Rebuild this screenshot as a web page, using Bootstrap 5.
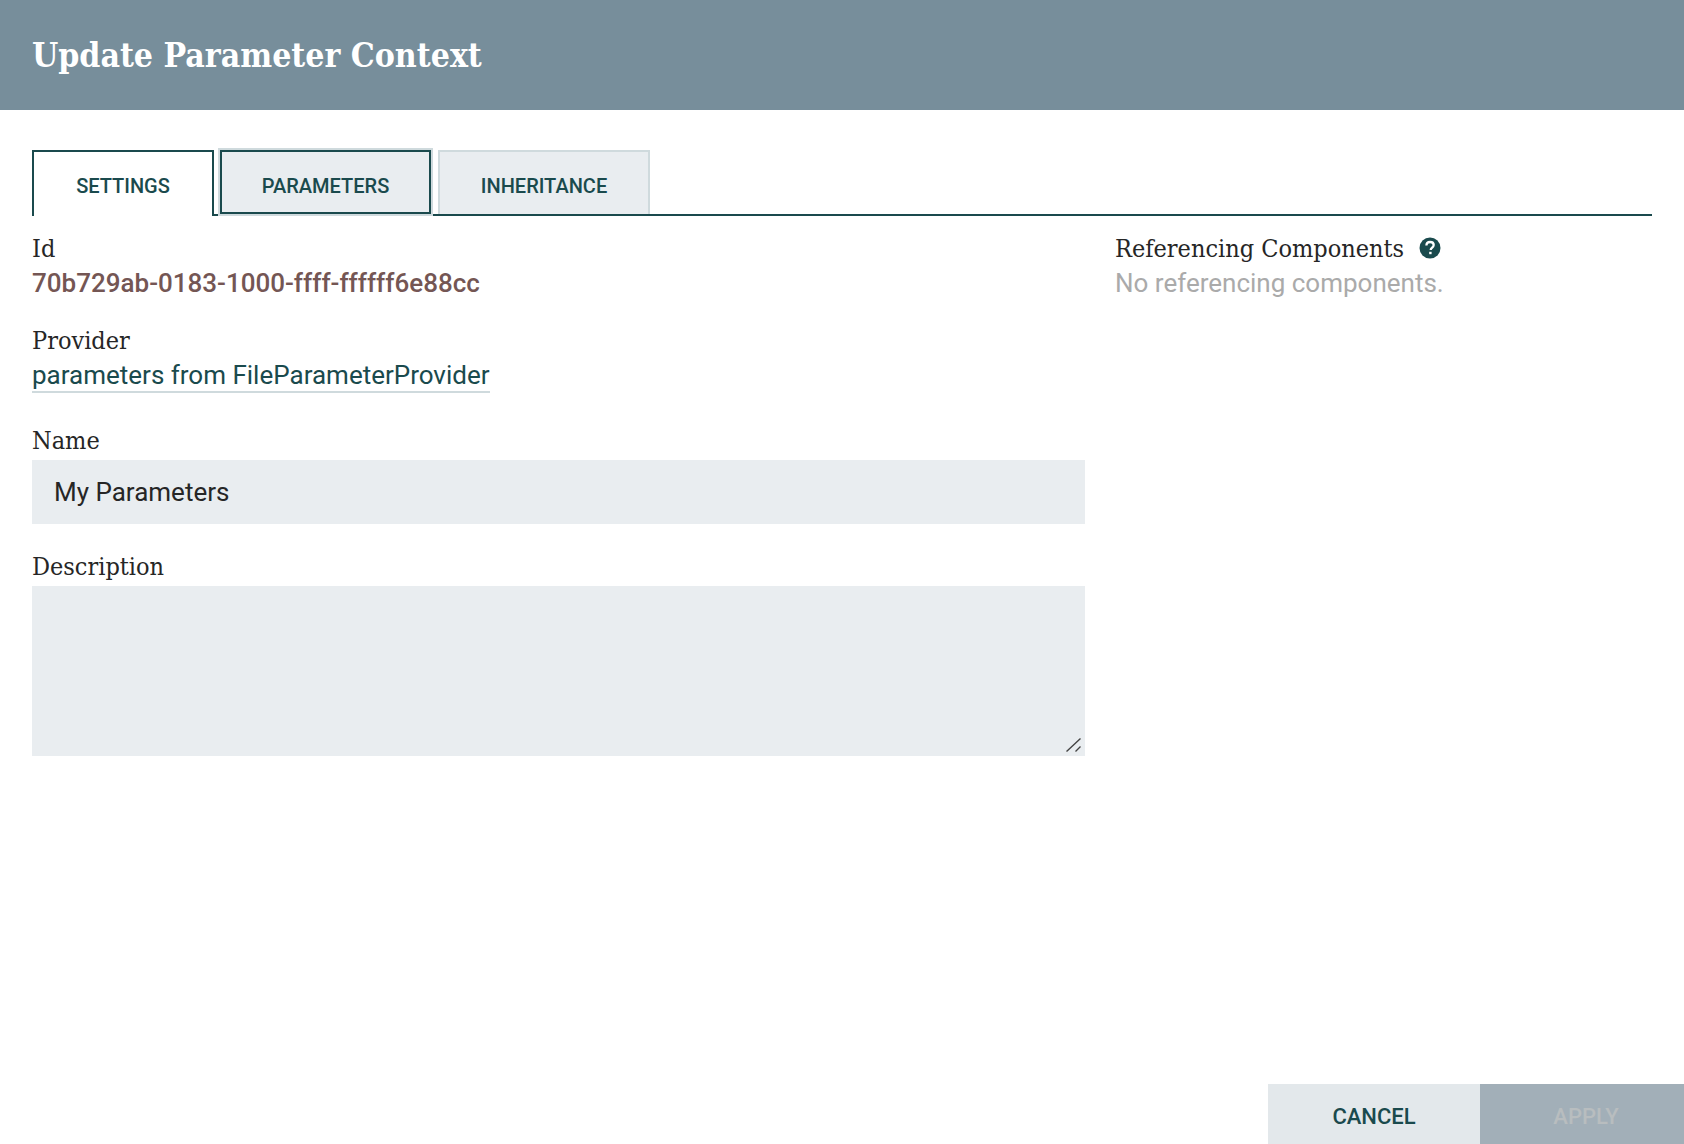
<!DOCTYPE html>
<html>
  <head>
    <title>Update Parameter Context</title>
    <link href="https://cdn.jsdelivr.net/npm/bootstrap@5.3.3/dist/css/bootstrap.min.css" rel="stylesheet">
    <style>
      body { font-family: Roboto, "Liberation Sans", sans-serif; color: #262626; height: 1144px; overflow: hidden; }
      .dlg-header { background: #778e9b; height: 110px; padding: 0 32px; color: #fff; font: 700 33.5px/112px "DejaVu Serif", serif; font-stretch: condensed; }
      .dlg-body { padding: 40px 32px 0; }
      .dlg-tabs { border-bottom: 2px solid #1a4a4d; height: 66px; gap: 6px; }
      .dlg-tabs .nav-link { width: auto; height: 64px; padding: 0; border-radius: 0; border: 2px solid #cfdadd; border-bottom: 0; background: #e9edf0; color: #1a4a4d; font-size: 20px; font-weight: 500; line-height: 68px; text-align: center; }
      .dlg-tabs .tab-a { width: 182px; height: 66px; background: #fff; border-color: #1a4a4d; position: relative; z-index: 1; }
      .dlg-tabs .tab-b { width: 211px; border: 2px solid #1a4a4d; outline: 2px solid #cfdadd; }
      .dlg-tabs .tab-c { width: 212px; margin-left: 1px; }
      .left-col { width: 1053px; }
      .right-col { margin-left: 30px; }
      .fld-label { font: 400 25px/34px "DejaVu Serif", serif; font-stretch: condensed; color: #262626; margin-top: 16px; }
      .lbl-prov { margin-top: 24px; }
      .lbl-name { margin-top: 31px; margin-bottom: 2px; }
      .lbl-desc { margin-top: 26px; margin-bottom: 2px; }
      .fld-value { font-size: 26px; line-height: 34px; }
      .id-value { color: #745654; font-weight: 500; }
      .prov-link { color: #1a4a4d; border-bottom: 2px solid #cfdadd; text-decoration: none; display: inline-block; line-height: 32px; }
      .none-value { color: #aaa; }
      .dlg-input { height: 64px; background: #e9edf0; border: 0; border-radius: 0; padding: 0 22px; font-size: 26px; color: #262626; }
      .dlg-area { height: 170px; background: #e9edf0; border: 0; border-radius: 0; resize: none; }
      .area-grip { position: absolute; right: 4px; bottom: 4px; width: 15px; height: 14px; pointer-events: none; }
      .help-dot { width: 22px; height: 22px; margin-left: 8px; vertical-align: -2px; }
      .dlg-foot { position: absolute; right: 0; bottom: 0; }
      .dlg-foot .btn { height: 60px; border: 0; border-radius: 0; font-size: 22px; font-weight: 500; padding: 4px 0 0; }
      .btn-cancel { width: 212px; background: #e3e8eb; color: #1a4a4d; }
      .dlg-foot .btn-apply, .dlg-foot .btn-apply:disabled { width: 204px; background: #a2afb8; color: #b8bdbf; opacity: 1; padding-left: 8px; }
    </style>
  </head>
  <body>
    <header class="dlg-header">Update Parameter Context</header>

    <main class="dlg-body">
      <ul class="nav dlg-tabs">
        <li class="nav-item"><a class="nav-link tab-a" href="#">SETTINGS</a></li>
        <li class="nav-item"><a class="nav-link tab-b" href="#">PARAMETERS</a></li>
        <li class="nav-item"><a class="nav-link tab-c" href="#">INHERITANCE</a></li>
      </ul>

      <div class="d-flex">
        <div class="left-col">
          <div class="fld-label">Id</div>
          <div class="fld-value id-value">70b729ab-0183-1000-ffff-ffffff6e88cc</div>

          <div class="fld-label lbl-prov">Provider</div>
          <div class="fld-value"><a class="prov-link" href="#">parameters from FileParameterProvider</a></div>

          <div class="fld-label lbl-name">Name</div>
          <input class="form-control dlg-input" type="text" value="My Parameters">

          <div class="fld-label lbl-desc">Description</div>
          <div class="position-relative">
            <textarea class="form-control dlg-area"></textarea>
            <svg class="area-grip" viewBox="0 0 15 14">
              <path d="M0.5 13.5 14.5 0.5M9.5 13.5 14.5 8.5" fill="none" stroke="#444" stroke-width="1.4"/>
            </svg>
          </div>
        </div>

        <div class="right-col">
          <div class="fld-label">Referencing Components
            <svg class="help-dot" viewBox="0 0 22 22">
              <circle cx="11" cy="11" r="10.5" fill="#1a4a4d"/>
              <path d="M7.4 8.6c0-2.2 1.6-3.6 3.7-3.6 2.1 0 3.6 1.3 3.6 3.1 0 1.5-.9 2.2-1.9 2.9-.7.5-1 .8-1 1.6v.4" fill="none" stroke="#fff" stroke-width="2.3"/>
              <rect x="10.2" y="14.8" width="2.4" height="2.4" fill="#fff"/>
            </svg>
          </div>
          <div class="fld-value none-value">No referencing components.</div>
        </div>
      </div>
    </main>

    <div class="dlg-foot d-flex">
      <button class="btn btn-cancel" type="button">CANCEL</button>
      <button class="btn btn-apply" type="button" disabled>APPLY</button>
    </div>
  </body>
</html>
